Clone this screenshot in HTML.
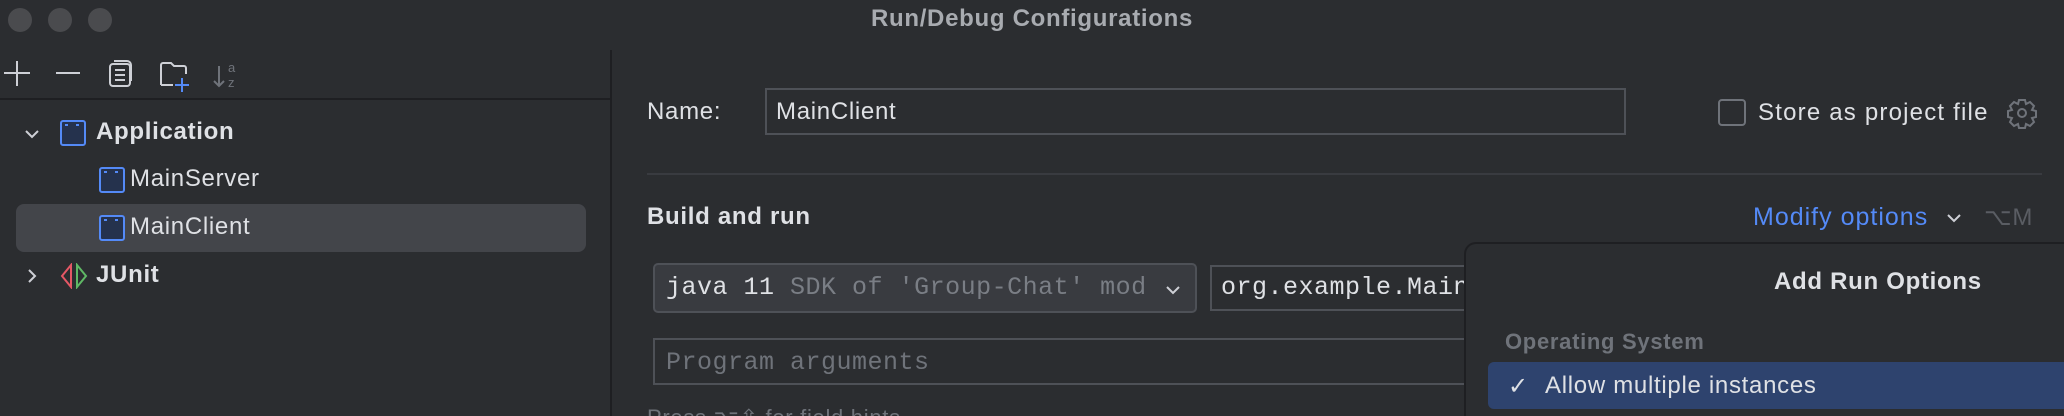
<!DOCTYPE html>
<html><head><meta charset="utf-8"><style>
*{margin:0;padding:0;box-sizing:border-box}
html,body{width:2064px;height:416px;overflow:hidden;background:#2b2d30}
#w{position:relative;width:2064px;height:416px;overflow:hidden;font-family:"Liberation Sans",sans-serif;color:#dfe1e5;letter-spacing:0.7px}
.a{position:absolute;white-space:nowrap}
.dot{position:absolute;top:8px;width:24px;height:24px;border-radius:50%;background:#4a4b4e}
.mono{font-family:"Liberation Mono",monospace;letter-spacing:0.5px}
.ic{position:absolute;width:26px;height:26px;border:2px solid #548af7;border-radius:3px;background:#25324d}
.ic:after{content:"";position:absolute;left:3px;top:2px;width:8px;height:2px;border-left:3px solid #548af7;border-right:3px solid #548af7}
</style></head><body><div id="w">
<div class="dot" style="left:8px"></div><div class="dot" style="left:48px"></div><div class="dot" style="left:88px"></div>
<div class="a" style="left:0;width:2064px;top:5px;text-align:center;font-weight:bold;font-size:24px;color:#a8abb0">Run/Debug Configurations</div>
<div class="a" style="left:610px;top:50px;width:2px;height:366px;background:#1e1f22"></div>
<div class="a" style="left:0;top:98px;width:610px;height:2px;background:#1e1f22"></div>
<svg class="a" style="left:0;top:56px" width="250" height="36" viewBox="0 0 250 36" fill="none" stroke="#ced0d6" stroke-width="2">
<path d="M17 5V30M4 17H30"/>
<path d="M56 17H80"/>
<rect x="110" y="8" width="20" height="22" rx="3"/><path d="M114 5h13a4 4 0 0 1 4 4v16"/><path d="M115 14h10M115 19h10M115 24h10"/>
<path d="M161 29V9a2 2 0 0 1 2-2h8l3 3h10a2 2 0 0 1 2 2v6M161 29h12" /><path d="M182 22v14M175 29h14" stroke="#548af7"/>
<path d="M219 10v20M214 25l5 5 5-5" stroke="#6f737a"/>
<text x="228" y="16" font-size="13" fill="#6f737a" stroke="none" font-family="Liberation Sans">a</text><text x="228" y="31" font-size="13" fill="#6f737a" stroke="none" font-family="Liberation Sans">z</text>
</svg>
<svg class="a" style="left:22px;top:124px" width="20" height="20"><path d="M4 7l6 6 6-6" stroke="#ced0d6" stroke-width="2" fill="none"/></svg>
<div class="ic" style="left:60px;top:120px"></div>
<div class="a" style="left:96px;top:118px;font-size:24px;font-weight:bold">Application</div>
<div class="a" style="left:16px;top:204px;width:570px;height:48px;background:#43454a;border-radius:8px"></div>
<div class="ic" style="left:99px;top:167px"></div>
<div class="a" style="left:130px;top:165px;font-size:24px">MainServer</div>
<div class="ic" style="left:99px;top:215px"></div>
<div class="a" style="left:130px;top:213px;font-size:24px">MainClient</div>
<svg class="a" style="left:22px;top:266px" width="20" height="20"><path d="M7 4l6 6-6 6" stroke="#ced0d6" stroke-width="2" fill="none"/></svg>
<svg class="a" style="left:58px;top:263px" width="34" height="26"><path d="M13 2L4 13l9 11z" stroke="#e55765" stroke-width="2" fill="none"/><path d="M19 2l9 11-9 11z" stroke="#5fb865" stroke-width="2" fill="none"/></svg>
<div class="a" style="left:96px;top:261px;font-size:24px;font-weight:bold">JUnit</div>
<div class="a" style="left:647px;top:98px;font-size:24px">Name:</div>
<div class="a" style="left:765px;top:88px;width:861px;height:47px;border:2px solid #4e5157"></div>
<div class="a" style="left:776px;top:98px;font-size:24px">MainClient</div>
<div class="a" style="left:1718px;top:99px;width:28px;height:27px;border:2px solid #6f737a;border-radius:4px"></div>
<div class="a" style="left:1758px;top:99px;font-size:24px;letter-spacing:1.2px">Store as project file</div>
<svg class="a" style="left:2006px;top:97px" width="32" height="32" viewBox="0 0 32 32" fill="none" stroke="#6f737a" stroke-width="2"><path d="M13 3h6l1 4 4-2 4 4-2 4 4 1v6l-4 1 2 4-4 4-4-2-1 4h-6l-1-4-4 2-4-4 2-4-4-1v-6l4-1-2-4 4-4 4 2z"/><circle cx="16" cy="16" r="4"/></svg>
<div class="a" style="left:647px;top:173px;width:1395px;height:2px;background:#393b40"></div>
<div class="a" style="left:647px;top:203px;font-size:24px;font-weight:bold">Build and run</div>
<div class="a" style="left:1753px;top:203px;font-size:25px;color:#548af7;letter-spacing:1px">Modify options</div>
<svg class="a" style="left:1944px;top:208px" width="20" height="20"><path d="M4 7l6 6 6-6" stroke="#ced0d6" stroke-width="2" fill="none"/></svg>
<div class="a" style="left:1984px;top:203px;font-size:24px;color:#5a5d63">⌥M</div>
<div class="a" style="left:653px;top:263px;width:544px;height:50px;background:#393b40;border:2px solid #4e5157;border-radius:5px"></div>
<div class="a mono" style="left:666px;top:273px;font-size:25px"><span style="color:#dfe1e5">java 11</span> <span style="color:#7a7e85">SDK of 'Group-Chat' mod</span></div>
<svg class="a" style="left:1163px;top:280px" width="20" height="20"><path d="M4 7l6 6 6-6" stroke="#ced0d6" stroke-width="2" fill="none"/></svg>
<div class="a" style="left:1210px;top:265px;width:300px;height:46px;border:2px solid #4e5157"></div>
<div class="a mono" style="left:1221px;top:273px;font-size:25px">org.example.Main</div>
<div class="a" style="left:653px;top:338px;width:860px;height:47px;border:2px solid #4e5157"></div>
<div class="a mono" style="left:666px;top:348px;font-size:25px;color:#6f737a">Program arguments</div>
<div class="a" style="left:647px;top:405px;width:400px;height:11px;overflow:hidden"><div style="font-size:22px;color:#6f737a;line-height:26px">Press ⌥⇧ for field hints</div></div>
<div class="a" style="left:1464px;top:242px;width:600px;height:174px;background:#2b2d30;border:2px solid #1e1f22;border-right:none;border-bottom:none;border-top-left-radius:12px"></div>
<div class="a" style="left:1774px;top:268px;font-size:24px;font-weight:bold">Add Run Options</div>
<div class="a" style="left:1505px;top:329px;font-size:22px;font-weight:bold;color:#6f737a">Operating System</div>
<div class="a" style="left:1488px;top:362px;width:576px;height:47px;background:#2e436e;border-radius:6px 0 0 6px"></div>
<div class="a" style="left:1508px;top:372px;font-size:24px">✓</div>
<div class="a" style="left:1545px;top:372px;font-size:24px">Allow multiple instances</div>
</div></body></html>
